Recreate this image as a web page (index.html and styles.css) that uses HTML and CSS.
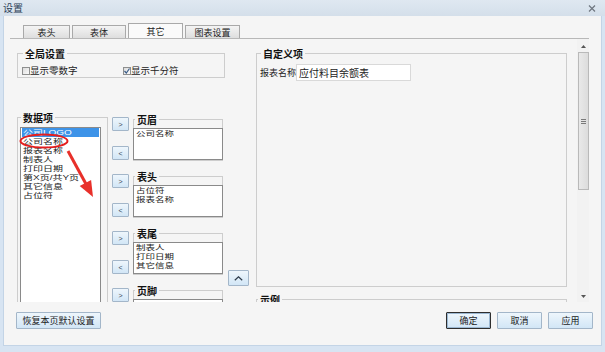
FILE: index.html
```html
<!DOCTYPE html>
<html lang="zh-CN">
<head>
<meta charset="utf-8">
<title>设置</title>
<link rel="stylesheet" href="styles.css">
</head>
<body>
<div class="window">
  <div class="titlebar">
    <span class="title">设置</span>
    <svg class="close" width="8" height="7" viewBox="0 0 8 7"><path d="M1 0.5L7 6.5M7 0.5L1 6.5" stroke="#6f7780" stroke-width="1.2" fill="none"/></svg>
  </div>
  <div class="frame">
    <div class="client">
      <div class="tabs">
        <div class="tab t1">表头</div>
        <div class="tab t2">表体</div>
        <div class="tab t3 active">其它</div>
        <div class="tab t4">图表设置</div>
      </div>
      <div class="panel">
        <div class="viewport">
          <div class="leftcol">
            <fieldset class="group global">
              <legend>全局设置</legend>
              <div class="checks">
                <label class="check"><span class="box"></span>显示零数字</label>
                <label class="check"><span class="box"><svg width="6" height="6" viewBox="0 0 6 6"><path d="M0.5 3L2.3 5L5.5 0.5" stroke="#3b5d88" stroke-width="1.2" fill="none"/></svg></span>显示千分符</label>
              </div>
            </fieldset>
            <div class="lower">
              <fieldset class="group data">
                <legend>数据项</legend>
                <ul class="list datalist">
                  <li class="sel"><span>公司LOGO</span></li>
                  <li><span>公司名称</span></li>
                  <li><span>报表名称</span></li>
                  <li><span>制表人</span></li>
                  <li><span>打印日期</span></li>
                  <li><span>第X页/共Y页</span></li>
                  <li><span>其它信息</span></li>
                  <li><span>占位符</span></li>
                </ul>
              </fieldset>
              <div class="sections">
                <div class="section">
                  <div class="movers"><button class="btn mv">&gt;</button><button class="btn mv">&lt;</button></div>
                  <fieldset class="group part"><legend>页眉</legend>
                    <ul class="list partlist"><li><span>公司名称</span></li></ul>
                  </fieldset>
                </div>
                <div class="section">
                  <div class="movers"><button class="btn mv">&gt;</button><button class="btn mv">&lt;</button></div>
                  <fieldset class="group part"><legend>表头</legend>
                    <ul class="list partlist"><li><span>占位符</span></li><li><span>报表名称</span></li></ul>
                  </fieldset>
                </div>
                <div class="section">
                  <div class="movers"><button class="btn mv">&gt;</button><button class="btn mv">&lt;</button></div>
                  <fieldset class="group part"><legend>表尾</legend>
                    <ul class="list partlist"><li><span>制表人</span></li><li><span>打印日期</span></li><li><span>其它信息</span></li></ul>
                  </fieldset>
                </div>
                <div class="section">
                  <div class="movers"><button class="btn mv">&gt;</button></div>
                  <fieldset class="group part"><legend>页脚</legend>
                    <ul class="list partlist"></ul>
                  </fieldset>
                </div>
              </div>
              <div class="upcol">
                <button class="btn up"><svg width="9" height="5" viewBox="0 0 9 5"><path d="M0.8 4.3L4.5 0.8L8.2 4.3" stroke="#2d3b4a" stroke-width="1.2" fill="none"/></svg></button>
              </div>
            </div>
          </div>
          <div class="rightcol">
            <fieldset class="group custom">
              <legend>自定义项</legend>
              <div class="field">
                <span class="lbl">报表名称</span>
                <span class="input">应付料目余额表</span>
              </div>
            </fieldset>
            <fieldset class="group sample"><legend>示例</legend></fieldset>
          </div>
        </div>
        <div class="scrollbar">
          <div class="sarrow"><svg width="5" height="3" viewBox="0 0 5 3"><path d="M0 3L2.5 0L5 3Z" fill="#555"/></svg></div>
          <div class="thumb"><span class="grip"></span></div>
          <div class="track"></div>
          <div class="sarrow"><svg width="5" height="3" viewBox="0 0 5 3"><path d="M0 0L2.5 3L5 0Z" fill="#555"/></svg></div>
        </div>
      </div>
      <div class="footer">
        <button class="btn wide">恢复本页默认设置</button>
        <div class="spacer"></div>
        <button class="btn dlg default">确定</button>
        <button class="btn dlg">取消</button>
        <button class="btn dlg">应用</button>
      </div>
    </div>
  </div>
  <svg class="annot" width="605" height="352" viewBox="0 0 605 352">
    <ellipse cx="44" cy="141" rx="23.5" ry="6.5" fill="none" stroke="#e41e1e" stroke-width="2"/>
    <path d="M68 151L86 184" stroke="#e8302a" stroke-width="3" fill="none"/>
    <path d="M93 197L79.7 186.1L91.1 179.9Z" fill="#e8302a"/>
  </svg>
</div>
</body>
</html>
```
FILE: styles.css
```css
* { box-sizing: border-box; margin: 0; padding: 0; }
html, body { width: 605px; height: 352px; overflow: hidden; }
body {
  font-family: "Noto Sans CJK SC", "Noto Sans", sans-serif;
  font-size: 9px;
  line-height: 9px;
  color: #1b1b1b;
  background: #d6e3f1;
}
.window {
  position: relative;
  width: 605px;
  height: 352px;
  display: flex;
  flex-direction: column;
  background: #d7e4f2;
}
.titlebar {
  height: 16px;
  flex: none;
  display: flex;
  align-items: center;
  justify-content: space-between;
  padding: 0 9px 0 3px;
  background: linear-gradient(#dfe8f1, #d4dfea);
}
.title { font-size: 10px; line-height: 12px; color: #2c3e57; }
.frame {
  flex: 1;
  display: flex;
  padding: 0 3px 6px 3px;
  background: #d7e4f2;
}
.client {
  flex: 1;
  display: flex;
  flex-direction: column;
  background: #f5f5f5;
  border: 1px solid #c3d4e6;
  border-top: none;
}
/* tabs */
.tabs {
  display: flex;
  align-items: flex-end;
  gap: 2px;
  height: 15px;
  margin: 7px 0 0 19px;
}
.tab {
  height: 13px;
  border: 1px solid #a9a9a9;
  border-bottom: none;
  background: linear-gradient(#f4f4f4, #dedede);
  display: flex;
  align-items: center;
  justify-content: center;
  font-size: 9px;
  color: #222;
}
.t1 { width: 47px; }
.t2 { width: 54px; }
.t3 { width: 55px; }
.t4 { width: 55px; }
.tab.active { height: 15px; background: #fafafa; }
/* panel */
.panel {
  display: flex;
  width: 579px;
  height: 264px;
  margin-left: 6px;
  border-top: 1px solid #b8b8b8;
}
.viewport {
  flex: 1;
  overflow: hidden;
  display: flex;
  align-items: flex-start;
  gap: 5px;
  padding: 10px 0 0 7px;
}
.leftcol { width: 234px; flex: none; display: flex; flex-direction: column; }
.rightcol { width: 311px; flex: none; display: flex; flex-direction: column; }

fieldset.group {
  border: 1px solid #cdcdcd;
  min-width: 0;
  flex: none;
}
fieldset.group legend {
  font-weight: bold;
  font-size: 10px;
  line-height: 9px;
  padding: 0 2px;
  margin-left: 1px;
  color: #111;
}
.global { width: 208px; height: 29px; padding: 8px 0 0 4px; }
.checks { display: flex; }
.check { width: 102px; display: flex; align-items: center; height: 9px; color: #222; font-size: 9.5px; }
.box {
  width: 8px; height: 8px;
  border: 1px solid #8e8f8f;
  background: linear-gradient(135deg, #dcdcdc, #fbfbfb);
  display: flex; align-items: center; justify-content: center;
}
.lower { display: flex; margin-top: 35px; align-items: flex-start; }
.data { width: 91px; height: 200px; padding: 5px 6px 0 2px; }
.data legend { margin-left: 3px; }
.list {
  list-style: none;
  background: #fff;
  border: 1px solid #8a8a8a;
  padding: 0 1px;
}
.list li { height: 9px; white-space: nowrap; padding-left: 1px; color: #1e1e1e; overflow: visible; }
.list li span {
  display: inline-block;
  font-family: "Liberation Sans", "Noto Sans CJK SC", sans-serif;
  font-size: 10px;
  line-height: 12px;
  transform: translateY(1px) scaleY(0.72);
  transform-origin: 0 0;
  vertical-align: top;
}
.partlist li span { font-size: 9.5px; }
.datalist { height: 200px; }
.datalist li.sel { background: #3d93e8; color: #fff; }
.sections { display: flex; flex-direction: column; gap: 11px; padding-top: 2px; margin-left: 4px; }
.section { display: flex; gap: 4px; height: 46px; }
.movers { width: 17px; display: flex; flex-direction: column; gap: 15px; padding-top: 2px; }
.part { width: 90px; height: 46px; padding: 4px 0 0 0; }
.part legend { margin-left: 5px; }
.partlist { height: 32px; margin: 0 -1px; }
.upcol { padding-top: 157px; margin-left: 5px; }

.btn {
  font-family: "Noto Sans CJK SC", "Noto Sans", sans-serif;
  font-size: 9px;
  line-height: 9px;
  color: #1b1b1b;
  border: 1px solid #a3b6c9;
  border-radius: 1px;
  background: linear-gradient(#eef6fc, #d2e6f6);
  display: flex;
  align-items: center;
  justify-content: center;
  padding: 0;
}
.mv { width: 17px; height: 14px; font-family: "Liberation Sans", sans-serif; font-size: 7px; color: #3a4a5a; }
.up { width: 21px; height: 16px; }

.custom { width: 311px; height: 238px; padding: 6px 0 0 3px; }
.field { display: flex; align-items: center; height: 17px; }
.lbl { width: 36px; color: #222; }
.input {
  width: 115px; height: 17px;
  border: 1px solid #d9d9d9;
  background: #fff;
  font-size: 10px;
  line-height: 15px;
  padding-left: 2px;
  color: #222;
}
.sample { width: 311px; height: 40px; margin-top: 8px; }

.scrollbar {
  width: 12px;
  flex: none;
  display: flex;
  flex-direction: column;
  padding-top: 1px;
  background: #f2f2f2;
}
.sarrow { height: 12px; display: flex; align-items: center; justify-content: center; flex: none; }
.thumb {
  height: 138px;
  flex: none;
  margin: 0 0 0 1px;
  border: 1px solid #b9b9b9;
  background: linear-gradient(90deg, #e9e9e9, #dcdcdc);
  display: flex;
  align-items: center;
  justify-content: center;
}
.grip {
  width: 5px; height: 5px;
  background: repeating-linear-gradient(#7a7a7a 0 1px, transparent 1px 2px);
}
.track { flex: 1; }

.footer {
  display: flex;
  gap: 6px;
  height: 17px;
  margin-top: 10px;
  padding: 0 8px 0 12px;
}
.spacer { flex: 1; }
.wide { width: 85px; height: 17px; }
.dlg { width: 45px; height: 17px; }
.default { border: 1px solid #2e2e2e; box-shadow: inset 0 0 0 1px #9cb8d2; }

.annot { position: absolute; left: 0; top: 0; pointer-events: none; }
```
